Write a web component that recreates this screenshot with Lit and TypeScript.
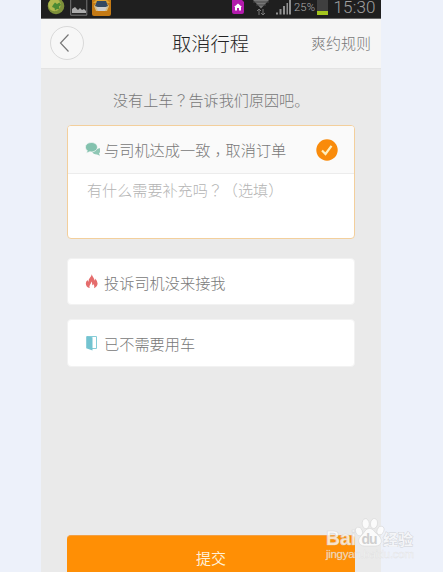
import { LitElement, html, css, svg } from "lit";
import { customElement } from "lit/decorators.js";

@customElement("status-bar")
class StatusBar extends LitElement {
  static styles = css`
    :host { display: block; height: 19px; background: #1f1f1f; border-bottom: 1px solid #666; overflow: hidden; box-sizing: border-box; }
    svg { display: block; }
    text { font-family: Roboto, sans-serif; }
  `;
  render() {
    return html`<svg width="340" height="18" viewBox="41 0 340 18">
      <circle cx="56" cy="6" r="8.3" fill="#7d8f3a" />
      <circle cx="54.5" cy="5" r="6.200" fill="#b1b94d" />
      <path d="M53 5l2-2.500L57 4l2.500-1.500L61 5l-2 1.500.5 3L57 9l-2 1.500L54.500 8 52 7z" fill="#4b8a33" />
      <path d="M70.7 -2V15.200H86.800V-2" fill="#252525" stroke="#777" stroke-width="1" />
      <path d="M72 13V9l3-2 3 3 2-2 2 2 2-1 2 2v2z" fill="#aaa" />
      <path d="M92 0h19v14q0 2-2 2H94q-2 0-2-2z" fill="#c47a15" />
      <path d="M93 3h17l-3-3H96z" fill="#dda436" />
      <path d="M94 6l3-4h9l3 4-2 5H96z" fill="#d7bd83" />
      <path d="M97 1h9l2 5q-6 3-13 0z" fill="#344962" />
      <path d="M96 7h11l-2 4h-7z" fill="#ccc" />
      <path d="M232 0h10l2 2v10q0 2-2 2h-8q-2 0-2-2z" fill="#b31bad" />
      <path d="M234 7l4-3.500 4 3.500h-1v3.500h-2V8h-2v2.500h-2V7z" fill="#fff" />
      <path d="M253 0h16l-8 8.500z" fill="#777" />
      <path d="M253 2h16M256 5h10" stroke="#494949" />
      <path d="M259 15V9M257 11l2-2 2 2M263 9v6M261 13l2 2 2-2" stroke="#777" fill="none" />
      <path d="M276 14.500v-2h2v2zM279.500 14.500V9h2v5.500zM283 14.500V6h2v8.500zM286.500 14.500V3h1.500v11.500zM289 14.500V0h2v14.500z" fill="#909090" />
      <text x="294" y="10.800" font-size="11.300" fill="#aaa" textLength="21">25%</text>
      <rect x="317" y="0" width="11" height="11" fill="#3f3f3f" />
      <rect x="317" y="11" width="11" height="4" fill="#a4c51e" />
      <text x="333.500" y="12.600" font-size="17" fill="#a0a0a0" textLength="42">15:30</text>
    </svg>`;
  }
}

const icons = {
  chat: svg`<path d="M7 9.500q1 3 5 3l3 1.300-1-2.300q2.500-2.600.5-5.500z" fill="#8fc7b5"/>
    <path d="M6.300.5C2.900.5.4 2.500.4 5.200q0 2.200 1.900 3.500L1.300 11.200l3.300-1.400c4.300.7 7.800-1.600 7.800-4.600C12.400 2.500 9.700.5 6.300.5z" fill="#83c2ae" stroke="#fafafa" stroke-width=".7"/>`,
  fire: svg`<path d="M6.700.2C7.400 2.900 9.500 4 9.600 6.500q.8-.7.700-2.100 2.300 2.800 2.300 5.200-.2 3-3.500 4.600 .8-2.500-.7-4.300-.3 1.200-1 1.400Q7.300 8.500 6.200 7.500q.1 2-1.300 3.400-.9 1.200-.2 3.200Q.9 13 .8 9.500q.1-1.900 1.800-3.400.2 1.300.9 1.600Q3.300 5.200 5.100 3.500 6.500 2 6.700.2z" fill="#e56c6c"/>`,
  door: svg`<path d="M2 1.500h9.500v12H6" fill="none" stroke="#87cdd8"/><path d="M1.200 1.200l6.300 1v13.300l-6.300-2.300z" fill="#73c3d0"/>`,
};

@customElement("app-root")
class AppRoot extends LitElement {
  static styles = css`
    :host { display: block; height: 572px; position: relative; overflow: hidden; background: #edf1fa; font-family: "Noto Sans CJK SC", sans-serif; font-weight: 300; color: #787878; }
    * { box-sizing: border-box; }
    .phone { width: 340px; height: 572px; margin-left: 41px; background: #eaeaea; display: flex; flex-direction: column; }
    status-bar { flex: none; }
    header { flex: none; height: 50px; background: #f5f5f5; border-bottom: 1px solid #e3e3e3; display: grid; grid-template-columns: 100px 1fr 100px; align-items: center; padding: 0 10px 1px 9px; }
    .back { width: 34px; height: 34px; border: 1px solid #d9d9d9; border-radius: 50%; background: #f7f7f7; display: block; }
    h1 { margin: 0; font-size: 19.300px; line-height: 28px; font-weight: 300; color: #222; text-align: center; white-space: nowrap; }
    .rule { text-align: right; font-size: 15px; line-height: 22px; white-space: nowrap; }
    main { flex: 1; display: flex; flex-direction: column; padding: 0 26px; }
    .hint { margin: 19px 0 14px; padding-left: 46px; font-size: 15.100px; line-height: 23px; white-space: nowrap; }
    .card { background: #fff; border: 1px solid #f2f2f2; border-radius: 4px; height: 48px; flex: none; width: 288px; }
    .card + .card { margin-top: 14px; }
    .row { display: flex; align-items: center; height: 47px; padding: 0 16px 0 17px; font-size: 15.200px; line-height: 23px; white-space: nowrap; }
    .card .icon { width: 15px; height: 17px; flex: none; margin-right: 4px; }
    .selected { height: 114px; border: 1.500px solid #f3cf9c; overflow: hidden; }
    .selected .row { height: 48px; background: #fafafa; border-bottom: 1px solid #ececec; }
    .selected + .card { margin-top: 19px; height: 47px; }
    .check { margin-left: auto; width: 22px; height: 22px; }
    .note { padding: 4px 0 0 19px; font-size: 15.100px; line-height: 23px; color: #b4b4b4; white-space: nowrap; }
    .mid { font-family: "Noto Sans CJK TC", sans-serif; line-height: 1; }
    .low { display: inline-block; vertical-align: -4px; }
    .submit { margin-top: auto; width: 288px; height: 37px; flex: none; border: 0; border-top: 1px solid #f3a044; border-radius: 4px 4px 0 0; background: #ff8f05; color: #fff0d8; font: 400 15px/22px "Noto Sans CJK SC", sans-serif; padding: 8px 0 0; display: block; }
    .mark { position: absolute; left: 322px; top: 514px; }
    .mark text { font-family: "Liberation Sans", "Noto Sans CJK SC", sans-serif; }
  `;
  render() {
    return html`
      <div class="phone">
        <status-bar></status-bar>
        <header>
          <svg class="back" viewBox="0 0 32 32"><path d="M17.500 7.500L9.500 16l8 8.500" fill="none" stroke="#777" stroke-width="1.200" /></svg>
          <h1>取消行程</h1>
          <span class="rule">爽约规则</span>
        </header>
        <main>
          <div class="hint">没有上车<span class="mid">？</span>告诉我们原因吧。</div>
          <section class="card selected">
            <div class="row">
              <svg class="icon" viewBox="0 -1 15 17">${icons.chat}</svg>
              <span>与司机达成一致<span class="mid low">，</span>取消订单</span>
              <svg class="check" viewBox="0 0 22 22"><circle cx="11" cy="11" r="10.700" fill="#f98b0b" /><path d="M6 11.500l3.500 3.500L15.500 6.800" fill="none" stroke="#ffefbd" stroke-width="2.200" /></svg>
            </div>
            <div class="note">有什么需要补充吗<span class="mid">？（</span>选填<span class="mid">）</span></div>
          </section>
          <section class="card"><div class="row"><svg class="icon" viewBox="0 0 15 17">${icons.fire}</svg><span>投诉司机没来接我</span></div></section>
          <section class="card"><div class="row"><svg class="icon" viewBox="0 0 15 17">${icons.door}</svg><span>已不需要用车</span></div></section>
          <button class="submit">提交</button>
        </main>
      </div>
      <svg class="mark" width="121" height="58" viewBox="322 514 121 58">
        <g fill="#fff" fill-opacity=".8" stroke="#d0d0d0" stroke-opacity=".7" stroke-width=".7">
          <text x="326" y="545" font-size="20" font-weight="700" textLength="30" lengthAdjust="spacingAndGlyphs">Bai</text>
          <ellipse cx="359" cy="531.500" rx="3.300" ry="4.500" transform="rotate(-20 359 531.500)" />
          <ellipse cx="365.700" cy="523.700" rx="3.500" ry="5" transform="rotate(-5 365.700 523.700)" />
          <ellipse cx="374" cy="523.500" rx="3.500" ry="5" transform="rotate(8 374 523.500)" />
          <ellipse cx="380.500" cy="530.500" rx="3.300" ry="4.500" transform="rotate(20 380.500 530.500)" />
          <path d="M369.500 528.500c-4 0-5 4-8 7-5 4-3 10.500 3 10.500h11c6 0 8-6 3-10.500-4-3-5-7-9-7z" />
        </g>
        <text x="383" y="544.500" font-size="15" font-weight="700" fill="#f4f5f8" stroke="#cfd1d6" stroke-width=".9" paint-order="stroke">经验</text>
        <text x="361.500" y="543.500" font-size="14" font-weight="700" fill="#cfcfcf" textLength="16">du</text>
        <text x="326" y="558" font-size="11.500" fill="#fff" fill-opacity=".7" stroke="#cfcfcf" stroke-opacity=".45" stroke-width=".5" textLength="88">jingyan.baidu.com</text>
      </svg>`;
  }
}
